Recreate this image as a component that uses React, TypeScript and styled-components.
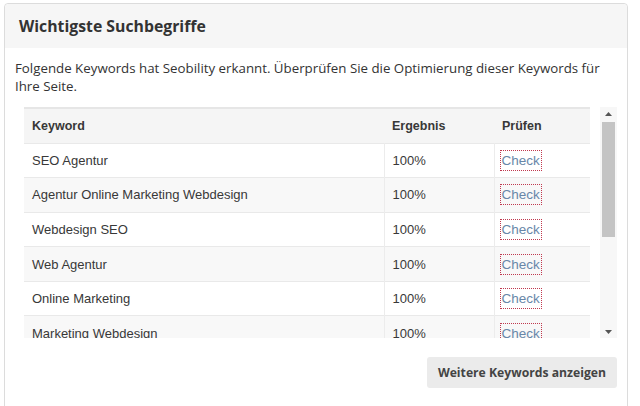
import React from "react";
import styled, { createGlobalStyle } from "styled-components";

const Global = createGlobalStyle`
  html, body { margin: 0; padding: 0; background: #fff; }
  body { font-family: "Open Sans", "Liberation Sans", sans-serif; color: #333; }
  * { box-sizing: border-box; }
`;

const Page = styled.div`
  padding: 3px 12px 0 4px;
  height: 406px;
  overflow: hidden;
`;

const Panel = styled.section`
  border: 1px solid #dcdcdc;
  border-radius: 4px;
  background: #fff;
  height: 420px;
`;

const PanelHeader = styled.header`
  background: #f6f6f6;
  height: 44px;
  display: flex;
  align-items: center;
  padding: 0 14px;
  border-radius: 4px 4px 0 0;
`;

const Title = styled.h2`
  margin: 0;
  font-size: 15.8px;
  font-weight: 700;
  color: #333;
  letter-spacing: 0;
`;

const PanelBody = styled.div`
  padding: 11px 10px 0 10px;
`;

const Intro = styled.p`
  margin: 0;
  font-size: 13.3px;
  line-height: 18px;
  color: #333;
`;

const ScrollArea = styled.div`
  margin: 12px 0 0 9px;
  height: 231px;
  display: flex;
  gap: 10px;
`;

const TableViewport = styled.div`
  flex: 1;
  overflow: hidden;
  border-top: 2px solid #e6e6e6;
`;

const Table = styled.table`
  width: 100%;
  border-collapse: collapse;
  font-family: "Liberation Sans", Arial, sans-serif;
  font-size: 13px;
  color: #383838;
`;

const HeadCell = styled.th<{ $w?: number }>`
  text-align: left;
  font-weight: 700;
  font-size: 12.5px;
  background: #f5f5f5;
  height: 34px;
  padding: 0 8px;
  width: ${(p) => (p.$w ? `${p.$w}px` : "auto")};
`;

const Row = styled.tr<{ $alt: boolean }>`
  background: ${(p) => (p.$alt ? "#f8f8f8" : "#fff")};
  border-top: 1px solid #e9e9e9;
`;

const Cell = styled.td<{ $divider?: boolean }>`
  height: 34.6px;
  padding: 0 8px;
  vertical-align: middle;
  border-left: ${(p) => (p.$divider ? "1px solid #ececec" : "none")};
`;

const CheckLink = styled.a`
  display: inline-block;
  color: #6887a8;
  text-decoration: none;
  padding: 1px 1px;
  margin-left: -2px;
  line-height: 17px;
  outline: 1px dotted #c0394f;
  outline-offset: 0;
  font-size: 13.5px;
`;

const Scrollbar = styled.div`
  width: 17px;
  display: flex;
  flex-direction: column;
  background: #f7f7f7;
`;

const ArrowBtn = styled.div`
  height: 13px;
  display: flex;
  align-items: center;
  justify-content: center;
`;

const Track = styled.div`
  flex: 1;
  display: flex;
  flex-direction: column;
  padding: 2px 2px;
`;

const Thumb = styled.div`
  height: 115px;
  background: #c4c4c4;
`;

const Footer = styled.div`
  display: flex;
  justify-content: flex-end;
  margin-top: 19px;
`;

const MoreButton = styled.button`
  font-family: "Open Sans", "Liberation Sans", sans-serif;
  font-weight: 700;
  font-size: 12.2px;
  color: #444;
  background: #ebebeb;
  border: none;
  border-radius: 3px;
  height: 31px;
  padding: 0 11px;
  cursor: pointer;
`;

const rows = [
  "SEO Agentur",
  "Agentur Online Marketing Webdesign",
  "Webdesign SEO",
  "Web Agentur",
  "Online Marketing",
  "Marketing Webdesign",
];

export default function App() {
  return (
    <>
      <Global />
      <Page>
        <Panel>
          <PanelHeader>
            <Title>Wichtigste Suchbegriffe</Title>
          </PanelHeader>
          <PanelBody>
            <Intro>
              Folgende Keywords hat Seobility erkannt. Überprüfen Sie die Optimierung dieser Keywords für Ihre Seite.
            </Intro>
            <ScrollArea>
              <TableViewport>
                <Table>
                  <thead>
                    <tr>
                      <HeadCell>Keyword</HeadCell>
                      <HeadCell $w={110}>Ergebnis</HeadCell>
                      <HeadCell $w={96}>Prüfen</HeadCell>
                    </tr>
                  </thead>
                  <tbody>
                    {rows.map((k, i) => (
                      <Row key={k} $alt={i % 2 === 1}>
                        <Cell>{k}</Cell>
                        <Cell $divider>100%</Cell>
                        <Cell $divider>
                          <CheckLink href="#">Check</CheckLink>
                        </Cell>
                      </Row>
                    ))}
                  </tbody>
                </Table>
              </TableViewport>
              <Scrollbar>
                <ArrowBtn>
                  <svg width="7" height="4" viewBox="0 0 7 4">
                    <path d="M0 4 L3.5 0 L7 4 Z" fill="#555" />
                  </svg>
                </ArrowBtn>
                <Track>
                  <Thumb />
                </Track>
                <ArrowBtn>
                  <svg width="7" height="4" viewBox="0 0 7 4">
                    <path d="M0 0 L7 0 L3.5 4 Z" fill="#555" />
                  </svg>
                </ArrowBtn>
              </Scrollbar>
            </ScrollArea>
            <Footer>
              <MoreButton>Weitere Keywords anzeigen</MoreButton>
            </Footer>
          </PanelBody>
        </Panel>
      </Page>
    </>
  );
}
